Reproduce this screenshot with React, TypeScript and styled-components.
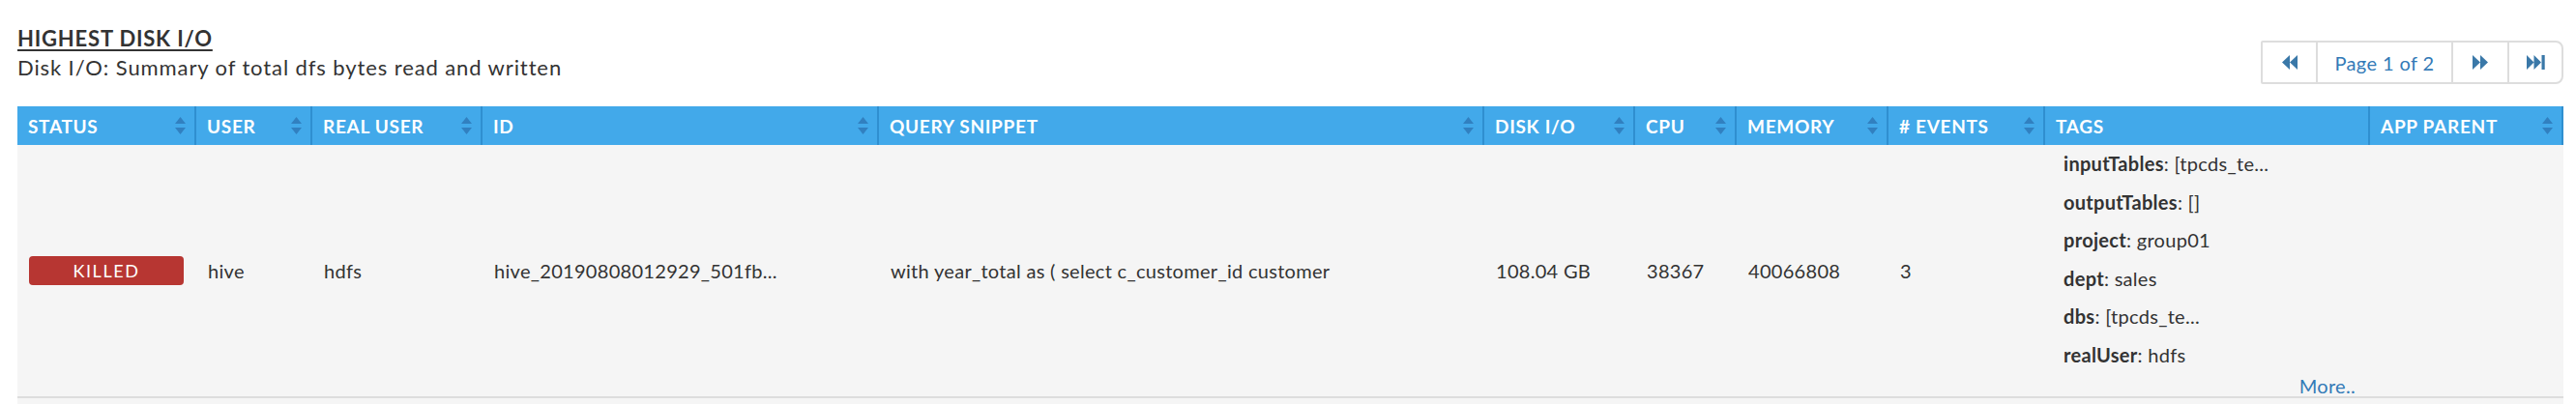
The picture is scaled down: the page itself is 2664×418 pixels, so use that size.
import React from "react";
import styled, { createGlobalStyle } from "styled-components";

const GlobalStyle = createGlobalStyle`
  body {
    margin: 0;
    background: #fff;
    font-family: Lato, "Open Sans", "Liberation Sans", sans-serif;
    color: #333;
  }
`;

const Page = styled.div`
  padding: 25px 13px 0 18px;
`;

const TopBar = styled.div`
  display: flex;
  justify-content: space-between;
  align-items: flex-end;
  height: 62px;
  margin-bottom: 23px;
`;

const Heading = styled.div`
  align-self: flex-start;
`;

const Title = styled.h2`
  margin: 0;
  font-size: 22px;
  line-height: 30px;
  font-weight: 700;
  letter-spacing: 0.8px;
  text-decoration: underline;
  text-underline-offset: 3px;
  text-decoration-thickness: 2px;
`;

const Subtitle = styled.div`
  font-size: 22px;
  line-height: 30px;
  letter-spacing: 0.9px;
`;

const Pager = styled.div`
  display: flex;
  height: 45px;
  border: 2px solid #ddd;
  border-radius: 2px 8px 8px 2px;
  box-sizing: border-box;
  background: #fff;
`;

const PagerButton = styled.div<{ $width: number; $last?: boolean }>`
  width: ${(p) => p.$width}px;
  display: flex;
  align-items: center;
  justify-content: center;
  border-right: ${(p) => (p.$last ? "none" : "2px solid #ddd")};
  color: #337ab7;
  font-size: 20px;
  letter-spacing: 0.4px;
  box-sizing: border-box;
`;

const Table = styled.div`
  display: grid;
  grid-template-columns: 185px 120px 176px 410px 626px 156px 105px 157px 162px 336px 200px;
`;

const HeaderCell = styled.div`
  height: 40px;
  display: flex;
  align-items: center;
  justify-content: space-between;
  padding: 0 9px 0 11px;
  background: #42a9ea;
  border-right: 2px solid #2f8fd0;
  color: #fff;
  font-size: 19px;
  font-weight: 700;
  letter-spacing: 0.7px;
  box-sizing: border-box;
  white-space: nowrap;
`;

const BodyCell = styled.div<{ $tags?: boolean }>`
  display: flex;
  flex-direction: column;
  justify-content: center;
  padding: ${(p) => (p.$tags ? "0 15px 0 19px" : "0 13px 0 12px")};
  background: #f5f5f5;
  border-bottom: 2px solid #ddd;
  font-size: 20px;
  line-height: 22.8px;
  letter-spacing: 0.3px;
  color: #333;
  box-sizing: border-box;
  white-space: nowrap;
`;

const Foot = styled.div`
  grid-column: 1 / -1;
  height: 8px;
  background: #f5f5f5;
`;

const StatusBadge = styled.div`
  height: 30px;
  border-radius: 4px;
  background: #b73632;
  color: #fff;
  display: flex;
  align-items: center;
  justify-content: center;
  font-size: 18px;
  letter-spacing: 1.6px;
`;

const TagLine = styled.div`
  line-height: 39.6px;
`;

const TagKey = styled.b`
  font-weight: 700;
`;

const MoreLink = styled.a`
  display: block;
  text-align: right;
  color: #337ab7;
  line-height: 22.8px;
  text-decoration: none;
`;

const SortIcon = () => (
  <svg width="11" height="18" viewBox="0 0 11 18">
    <polygon points="5.5,0 11,7 0,7" fill="#3180c0" />
    <polygon points="0,11 11,11 5.5,18" fill="#3180c0" />
  </svg>
);

const BackwardIcon = () => (
  <svg width="16" height="15" viewBox="0 0 16 15">
    <path d="M0 7.5 L8 0 V15 Z M8 7.5 L16 0 V15 Z" fill="#3a78a8" />
  </svg>
);

const ForwardIcon = () => (
  <svg width="16" height="15" viewBox="0 0 16 15">
    <path d="M0 0 L8 7.5 L0 15 Z M8 0 L16 7.5 L8 15 Z" fill="#3a78a8" />
  </svg>
);

const FastForwardIcon = () => (
  <svg width="19" height="15" viewBox="0 0 19 15">
    <path d="M0 0 L7.5 7.5 L0 15 Z M7.5 0 L15 7.5 L7.5 15 Z" fill="#3a78a8" />
    <rect x="15.5" y="0" width="3.2" height="15" fill="#3a78a8" />
  </svg>
);

const columns = [
  { label: "STATUS", sortable: true },
  { label: "USER", sortable: true },
  { label: "REAL USER", sortable: true },
  { label: "ID", sortable: true },
  { label: "QUERY SNIPPET", sortable: true },
  { label: "DISK I/O", sortable: true },
  { label: "CPU", sortable: true },
  { label: "MEMORY", sortable: true },
  { label: "# EVENTS", sortable: true },
  { label: "TAGS", sortable: false },
  { label: "APP PARENT", sortable: true },
];

const tags = [
  ["inputTables", "[tpcds_te..."],
  ["outputTables", "[]"],
  ["project", "group01"],
  ["dept", "sales"],
  ["dbs", "[tpcds_te..."],
  ["realUser", "hdfs"],
];

const App: React.FC = () => {
  return (
    <Page>
      <GlobalStyle />
      <TopBar>
        <Heading>
          <Title>HIGHEST DISK I/O</Title>
          <Subtitle>Disk I/O: Summary of total dfs bytes read and written</Subtitle>
        </Heading>
        <Pager>
          <PagerButton $width={57}>
            <BackwardIcon />
          </PagerButton>
          <PagerButton $width={140}>Page 1 of 2</PagerButton>
          <PagerButton $width={58}>
            <ForwardIcon />
          </PagerButton>
          <PagerButton $width={54} $last>
            <FastForwardIcon />
          </PagerButton>
        </Pager>
      </TopBar>

      <Table>
        {columns.map((col) => (
          <HeaderCell key={col.label}>
            <span>{col.label}</span>
            {col.sortable && <SortIcon />}
          </HeaderCell>
        ))}

        <BodyCell>
          <StatusBadge>KILLED</StatusBadge>
        </BodyCell>
        <BodyCell>hive</BodyCell>
        <BodyCell>hdfs</BodyCell>
        <BodyCell>hive_20190808012929_501fb...</BodyCell>
        <BodyCell>with year_total as ( select c_customer_id customer</BodyCell>
        <BodyCell>108.04 GB</BodyCell>
        <BodyCell>38367</BodyCell>
        <BodyCell>40066808</BodyCell>
        <BodyCell>3</BodyCell>
        <BodyCell $tags>
          {tags.map(([key, value]) => (
            <TagLine key={key}>
              <TagKey>{key}</TagKey>: {value}
            </TagLine>
          ))}
          <MoreLink>More..</MoreLink>
        </BodyCell>
        <BodyCell />
        <Foot />
      </Table>
    </Page>
  );
};

export default App;
